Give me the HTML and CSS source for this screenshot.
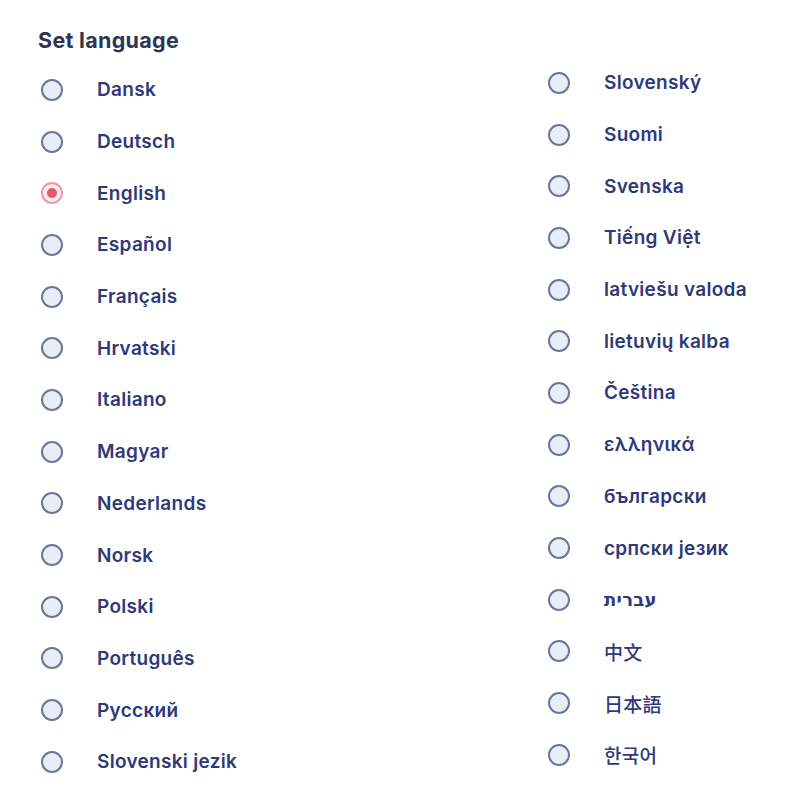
FILE: index.html
```html
<!DOCTYPE html>
<html>
<head>
<meta charset="utf-8">
<link rel="stylesheet" href="styles.css">
</head>
<body>
<div class="page">
  <div class="col col-left">
    <h1 class="title">Set language</h1>
    <ul class="list">
      <li class="item"><span class="radio"></span><span class="label">Dansk</span></li>
      <li class="item"><span class="radio"></span><span class="label">Deutsch</span></li>
      <li class="item"><span class="radio checked"></span><span class="label">English</span></li>
      <li class="item"><span class="radio"></span><span class="label">Español</span></li>
      <li class="item"><span class="radio"></span><span class="label">Français</span></li>
      <li class="item"><span class="radio"></span><span class="label">Hrvatski</span></li>
      <li class="item"><span class="radio"></span><span class="label">Italiano</span></li>
      <li class="item"><span class="radio"></span><span class="label">Magyar</span></li>
      <li class="item"><span class="radio"></span><span class="label">Nederlands</span></li>
      <li class="item"><span class="radio"></span><span class="label">Norsk</span></li>
      <li class="item"><span class="radio"></span><span class="label">Polski</span></li>
      <li class="item"><span class="radio"></span><span class="label">Português</span></li>
      <li class="item"><span class="radio"></span><span class="label">Русский</span></li>
      <li class="item"><span class="radio"></span><span class="label">Slovenski jezik</span></li>
    </ul>
  </div>
  <div class="col col-right">
    <ul class="list">
      <li class="item"><span class="radio"></span><span class="label">Slovenský</span></li>
      <li class="item"><span class="radio"></span><span class="label">Suomi</span></li>
      <li class="item"><span class="radio"></span><span class="label">Svenska</span></li>
      <li class="item"><span class="radio"></span><span class="label">Tiếng Việt</span></li>
      <li class="item"><span class="radio"></span><span class="label">latviešu valoda</span></li>
      <li class="item"><span class="radio"></span><span class="label">lietuvių kalba</span></li>
      <li class="item"><span class="radio"></span><span class="label">Čeština</span></li>
      <li class="item"><span class="radio"></span><span class="label">ελληνικά</span></li>
      <li class="item"><span class="radio"></span><span class="label">български</span></li>
      <li class="item"><span class="radio"></span><span class="label">српски језик</span></li>
      <li class="item"><span class="radio"></span><span class="label hebrew" dir="rtl">עברית</span></li>
      <li class="item"><span class="radio"></span><span class="label cjk">中文</span></li>
      <li class="item"><span class="radio"></span><span class="label cjk">日本語</span></li>
      <li class="item"><span class="radio"></span><span class="label cjk">한국어</span></li>
    </ul>
  </div>
</div>
</body>
</html>
```

FILE: styles.css
```css
html, body {
  margin: 0;
  padding: 0;
  background: #ffffff;
}
body {
  font-family: Inter, "Noto Sans", "Noto Sans CJK SC", sans-serif;
  color: #2f3978;
}
.page {
  display: grid;
  grid-template-columns: 507px 1fr;
  padding-left: 41px;
  width: 800px;
  height: 800px;
  box-sizing: border-box;
}
.title {
  margin: 0;
  padding-top: 28px;
  height: 24px;
  line-height: 24px;
  font-size: 21.5px;
  font-weight: 700;
  letter-spacing: 0.3px;
  color: #2d3552;
  margin-left: -3px;
}
.list {
  list-style: none;
  margin: 0;
  padding: 0;
}
.col-left .list {
  padding-top: 12px;
}
.col-right .list {
  padding-top: 57px;
}
.item {
  display: flex;
  align-items: center;
  height: 51.7px;
}
.radio {
  flex: none;
  width: 18px;
  height: 18px;
  border: 2px solid #6d7598;
  border-radius: 50%;
  background: #e9edf5;
  margin-right: 34px;
  position: relative;
}
.radio.checked {
  border-color: #ef9aa8;
  background: #fcecef;
}
.radio.checked::after {
  content: "";
  position: absolute;
  left: 4px;
  top: 4px;
  width: 10px;
  height: 10px;
  border-radius: 50%;
  background: #e8566f;
}
.label {
  font-size: 19px;
  font-weight: 600;
  letter-spacing: 0.3px;
}
.hebrew {
  font-family: "DejaVu Sans", sans-serif;
  font-weight: 700;
  font-size: 18px;
}
.cjk {
  font-family: "Noto Sans CJK SC", "Noto Sans CJK KR", sans-serif;
  font-weight: 500;
}
```
